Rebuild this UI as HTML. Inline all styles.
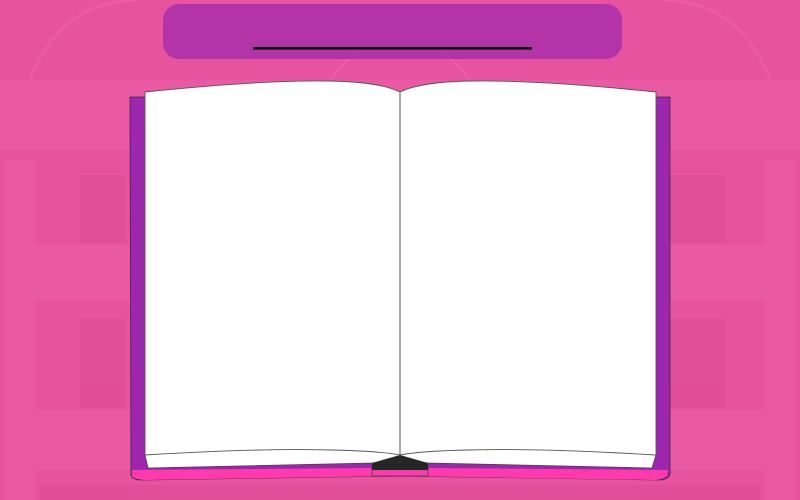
<!DOCTYPE html>
<html><head><meta charset="utf-8"><style>
html,body{margin:0;padding:0;width:800px;height:500px;overflow:hidden;background:#e8529f}
</style></head><body>
<svg width="800" height="500" viewBox="0 0 800 500" xmlns="http://www.w3.org/2000/svg">
<rect width="800" height="500" fill="#e8539f"/>
<g fill="#f06bb0" opacity="0.3">
<rect x="0" y="80" width="800" height="70"/>
<rect x="5" y="160" width="30" height="340"/>
<rect x="765" y="160" width="30" height="340"/>
<rect x="25" y="245" width="110" height="55"/>
<rect x="665" y="245" width="110" height="55"/>
<rect x="25" y="410" width="110" height="60"/>
<rect x="665" y="410" width="110" height="60"/>
</g>
<g fill="#d2428e" opacity="0.3">
<rect x="80" y="175" width="45" height="68"/>
<rect x="670" y="175" width="55" height="68"/>
<rect x="80" y="318" width="45" height="90"/>
<rect x="670" y="318" width="55" height="90"/>
<rect x="40" y="485" width="720" height="15"/>
</g>
<g fill="none" stroke="#f27cb8" stroke-width="2" opacity="0.3">
<path d="M30 80 Q60 0 140 0"/><path d="M770 80 Q740 0 660 0"/>
<path d="M330 80 Q400 -10 470 80"/>
</g>
<!-- banner -->
<rect x="163" y="4" width="459" height="55" rx="16" fill="#b033a8" opacity="0.95"/>
<rect x="253" y="47" width="279" height="2.5" fill="#000"/>
<!-- cover -->
<path d="M130 97 H670 V474 Q669 479 660 480 L400 476 L140 480 Q131 479 131 474 Z" fill="#9c27ae" stroke="#333" stroke-width="0.8"/>
<path d="M132 470 L372 468 L428 468 L668 470 L667 476 Q660 480 655 480 L400 476 L145 480 Q134 479 132 476 Z" fill="#ff3aac"/>
<rect x="372" y="468" width="56" height="8" fill="#ff3aac" stroke="#333" stroke-width="0.6"/>
<!-- lower page layer -->
<path d="M145 440 L145 455 L148 468 L372 463 L428 463 L652 468 L656 455 L656 440 Z" fill="#fff" stroke="#444" stroke-width="0.8"/>
<!-- spine -->
<path d="M372 470 L372 463 L400 455 L428 463 L428 470 Z" fill="#262626"/>
<!-- pages -->
<path d="M145 92 Q260 80 330 81 Q380 82 400 92 Q420 82 470 81 Q540 80 656 92 L656 455 Q540 448 470 450 Q420 451 400 455 Q380 451 330 450 Q260 448 145 455 Z" fill="#fff" stroke="#555" stroke-width="0.9"/>
<line x1="400" y1="92" x2="400" y2="455" stroke="#555" stroke-width="1"/>
</svg>
</body></html>
